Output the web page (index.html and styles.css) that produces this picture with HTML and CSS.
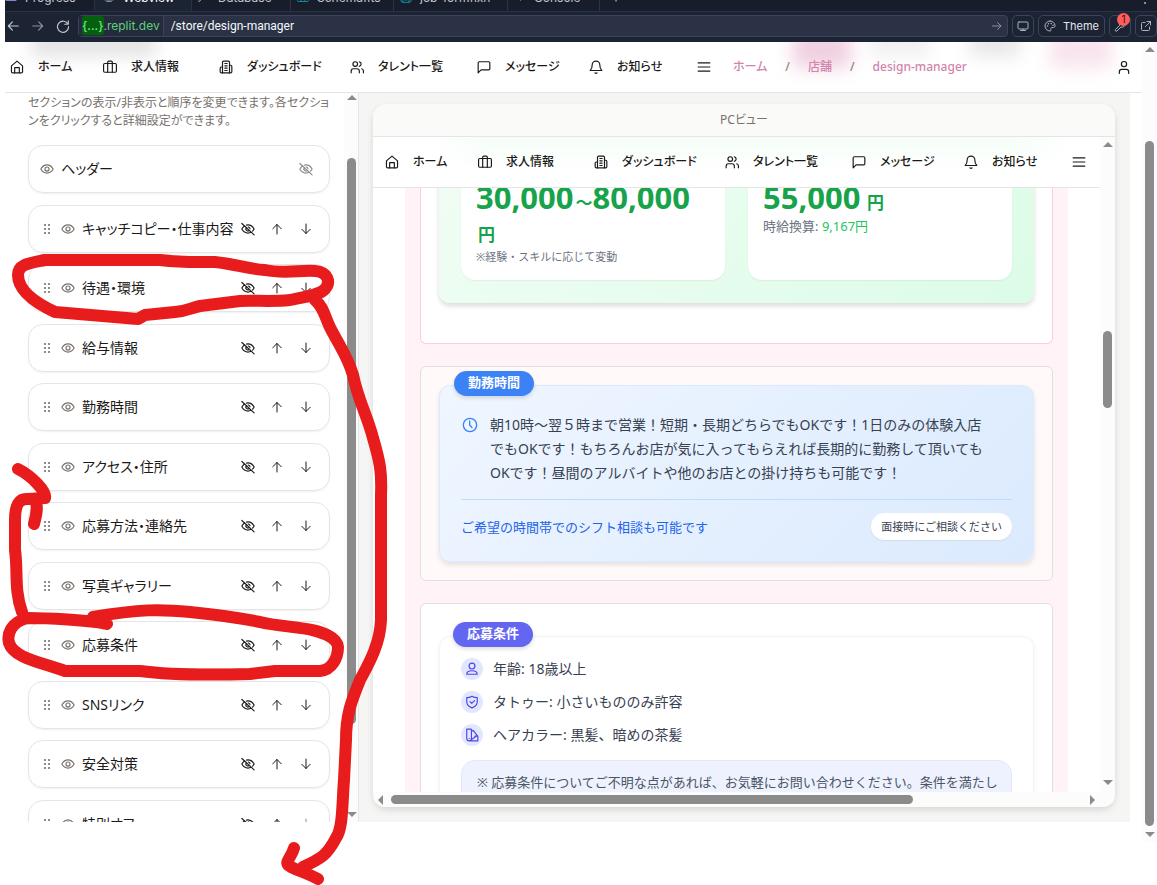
FILE: index.html
```html
<!DOCTYPE html>
<html lang="ja">
<head>
<meta charset="utf-8">
<title>design-manager</title>
<link rel="stylesheet" href="styles.css">
</head>
<body>
<svg class="sprite" aria-hidden="true">
  <symbol id="home" viewBox="0 0 24 24"><path d="M2.500 10 12 2l9.500 8v10a2 2 0 0 1-2 2h-15a2 2 0 0 1-2-2z"/><path d="M8 22v-9h8v9"/></symbol>
  <symbol id="case" viewBox="0 0 24 24"><rect x="1" y="6" width="22" height="15" rx="2"/><path d="M8 21V4a2 2 0 0 1 2-2h4a2 2 0 0 1 2 2v17"/></symbol>
  <symbol id="building" viewBox="0 0 24 24"><path d="M6 22V4a2 2 0 0 1 2-2h8a2 2 0 0 1 2 2v18z"/><path d="M6 12H4a2 2 0 0 0-2 2v6a2 2 0 0 0 2 2h2M18 9h2a2 2 0 0 1 2 2v9a2 2 0 0 1-2 2h-2M10 6h4M10 10h4M10 14h4M10 18h4"/></symbol>
  <symbol id="users" viewBox="0 0 24 24"><circle cx="9" cy="7" r="4"/><path d="M2 22v-3a4 4 0 0 1 4-4h6a4 4 0 0 1 4 4v3M23 22v-3a4 4 0 0 0-3-3.9M16 3.1a4 4 0 0 1 0 7.8"/></symbol>
  <symbol id="message" viewBox="0 0 24 24"><path d="M22 15a2 2 0 0 1-2 2H7l-5 5V5a2 2 0 0 1 2-2h16a2 2 0 0 1 2 2z"/></symbol>
  <symbol id="bell" viewBox="0 0 24 24"><path d="M5.500 8a6.500 6 0 0 1 13 0c0 7 3.500 10 3.500 10H2s3.500-3 3.500-10M10.300 22a2 2 0 0 0 3.400 0"/></symbol>
  <symbol id="menu" viewBox="0 0 24 24"><path d="M2 5h20M2 12h20M2 19h20"/></symbol>
  <symbol id="user" viewBox="0 0 24 24"><circle cx="12" cy="7" r="4.500"/><path d="M4 23v-3a4 4 0 0 1 4-4h8a4 4 0 0 1 4 4v3"/></symbol>
  <symbol id="eye" viewBox="0 0 24 24"><path d="M1.500 12C4 7.500 7.500 5 12 5s8 2.500 10.500 7C20 16.500 16.500 19 12 19s-8-2.500-10.500-7z"/><circle cx="12" cy="12" r="3.500"/></symbol>
  <symbol id="eye-off" viewBox="0 0 24 24"><path d="M1.500 2.500 22.500 22M6.500 6.500C4.500 7.700 2.800 9.600 1.500 12 4 16.500 7.500 19 12 19c2 0 3.700-.5 5.300-1.300M9.500 5.300c.8-.2 1.600-.3 2.500-.3 4.500 0 8 2.500 10.500 7-.8 1.400-1.700 2.600-2.700 3.600M9.500 9.500a3.500 3.500 0 0 0 5 5M12.500 8.500a3.500 3.500 0 0 1 3 3"/></symbol>
  <symbol id="up" viewBox="0 0 24 24"><path d="M12 22V3M3.500 11.500 12 3l8.500 8.500"/></symbol>
  <symbol id="down" viewBox="0 0 24 24"><path d="M12 2v19M3.500 12.500 12 21l8.500-8.500"/></symbol>
  <symbol id="left" viewBox="0 0 24 24"><path d="M21 12H4M11 5l-7 7 7 7"/></symbol>
  <symbol id="right" viewBox="0 0 24 24"><path d="M3 12h17M13 5l7 7-7 7"/></symbol>
  <symbol id="reload" viewBox="0 0 24 24"><path d="M21 3v6h-6M20.500 9A9.500 9.500 0 1 0 21.500 13"/></symbol>
  <symbol id="grip" viewBox="0 0 8 12"><g fill="currentColor" stroke="none"><circle cx="2" cy="2" r="1.100"/><circle cx="6" cy="2" r="1.100"/><circle cx="2" cy="6" r="1.100"/><circle cx="6" cy="6" r="1.100"/><circle cx="2" cy="10" r="1.100"/><circle cx="6" cy="10" r="1.100"/></g></symbol>
  <symbol id="monitor" viewBox="0 0 24 24"><rect x="2" y="4" width="20" height="14" rx="2"/><path d="M12 18v3M7 21h10"/></symbol>
  <symbol id="palette" viewBox="0 0 24 24"><path d="M12 2a10 10 0 1 0 0 20c2 0 2-2 1.500-3.500S14 15 16 15h3c2 0 3-1 3-4 0-5-4.500-9-10-9z"/><path d="M7 12h.1M9 7.500h.1M14.500 7h.1M18 10.500h.1" stroke-width="3"/></symbol>
  <symbol id="wrench" viewBox="0 0 24 24"><path d="M14 3a6 6 0 0 0-3 8L3 19a2 2 0 0 0 3 3l8-8a6 6 0 0 0 8-7l-4 3-3-3 3-4a6 6 0 0 0-4 0z"/></symbol>
  <symbol id="external" viewBox="0 0 24 24"><path d="M14 3h7v7M21 3 11 13M19 14v5a2 2 0 0 1-2 2H5a2 2 0 0 1-2-2V7a2 2 0 0 1 2-2h5"/></symbol>
  <symbol id="clock" viewBox="0 0 24 24"><circle cx="12" cy="12" r="10"/><path d="M11.500 6v6l3.500 4"/></symbol>
  <symbol id="person" viewBox="0 0 24 24"><circle cx="12" cy="7" r="5"/><path d="M3 21c0-4 4-6 9-6s9 2 9 6z"/></symbol>
  <symbol id="shield" viewBox="0 0 24 24"><path d="M12 2c3 2 6 2.500 9 2.500V11c0 5-3.500 9-9 11-5.500-2-9-6-9-11V4.500C6 4.500 9 4 12 2z"/><path d="m8.500 11.500 3 3 5-5"/></symbol>
  <symbol id="swatch" viewBox="0 0 24 24"><path d="M3 2h7a1 1 0 0 1 1 1v15a4 4 0 0 1-8 0zM11 6l3-2 7 9L9 21.500M17 14h5v8H7M7 18h.1"/></symbol>
</svg>

<header class="ide">
  <div class="tabs">
    <span class="tab t1"><svg class="i12 purple"><use href="#menu"/></svg>Progress</span>
    <span class="tab t2 active"><svg class="i12"><use href="#monitor"/></svg>Webview</span>
    <span class="tab t3"><svg class="i12"><use href="#message"/></svg>Database</span>
    <span class="tab t4"><svg class="i12 teal"><use href="#case"/></svg>Schemaflts</span>
    <span class="tab t5"><svg class="i12 teal"><use href="#building"/></svg>job-formfixh</span>
    <span class="tab t6"><svg class="i12"><use href="#right"/></svg>Console</span>
    <span class="tab">+</span>
    <span class="tab more">⋮</span>
  </div>
  <div class="toolbar">
    <button class="bare" aria-label="戻る"><svg class="i14"><use href="#left"/></svg></button>
    <button class="bare dim" aria-label="進む"><svg class="i14"><use href="#right"/></svg></button>
    <button class="bare" aria-label="再読み込み"><svg class="i14"><use href="#reload"/></svg></button>
    <div class="address">
      <span class="host"><b>{...}</b>.replit.dev</span>
      <input class="path" aria-label="パス" value="/store/design-manager">
      <svg class="i12 go"><use href="#right"/></svg>
    </div>
    <button class="tool" aria-label="デバイス"><svg class="i12"><use href="#monitor"/></svg></button>
    <button class="tool theme"><svg class="i12"><use href="#palette"/></svg>Theme</button>
    <button class="tool" aria-label="開発ツール"><svg class="i12"><use href="#wrench"/></svg><span class="count">1</span></button>
    <button class="tool" aria-label="新しいタブ"><svg class="i12"><use href="#external"/></svg></button>
  </div>
</header>

<div class="window">
  <div class="app">
    <nav class="nav main-nav">
      <div class="haze"><i class="h1"></i><i class="h2"></i><i class="h3"></i><i class="h4"></i><i class="h5"></i></div>
      <a href="#"><svg class="i14"><use href="#home"/></svg>ホーム</a>
      <a href="#"><svg class="i14"><use href="#case"/></svg>求人情報</a>
      <a href="#"><svg class="i14"><use href="#building"/></svg>ダッシュボード</a>
      <a href="#"><svg class="i14"><use href="#users"/></svg>タレント一覧</a>
      <a href="#"><svg class="i14"><use href="#message"/></svg>メッセージ</a>
      <a href="#"><svg class="i14"><use href="#bell"/></svg>お知らせ</a>
      <button class="bare" aria-label="メニュー"><svg class="i14"><use href="#menu"/></svg></button>
      <div class="crumbs"><a href="#">ホーム</a><span>/</span><a href="#">店舗</a><span>/</span><a href="#">design-manager</a></div>
      <button class="bare account" aria-label="アカウント"><svg class="i14"><use href="#user"/></svg></button>
    </nav>

    <main class="split">
      <aside class="side">
        <div class="side-body">
          <p class="lead">セクションの表示/非表示と順序を変更できます。各セクションをクリックすると詳細設定ができます。</p>
          <ul class="sections">
            <li class="fixed"><svg class="i14 soft"><use href="#eye"/></svg><span>ヘッダー</span><button class="bare" disabled aria-label="非表示"><svg class="i14"><use href="#eye-off"/></svg></button></li>
            <li><svg class="grip"><use href="#grip"/></svg><svg class="i14 soft"><use href="#eye"/></svg><span>キャッチコピー・仕事内容</span><button class="bare" aria-label="非表示"><svg class="i14"><use href="#eye-off"/></svg></button><button class="bare" aria-label="上へ"><svg class="i12"><use href="#up"/></svg></button><button class="bare" aria-label="下へ"><svg class="i12"><use href="#down"/></svg></button></li>
            <li><svg class="grip"><use href="#grip"/></svg><svg class="i14 soft"><use href="#eye"/></svg><span>待遇・環境</span><button class="bare" aria-label="非表示"><svg class="i14"><use href="#eye-off"/></svg></button><button class="bare" aria-label="上へ"><svg class="i12"><use href="#up"/></svg></button><button class="bare" aria-label="下へ"><svg class="i12"><use href="#down"/></svg></button></li>
            <li><svg class="grip"><use href="#grip"/></svg><svg class="i14 soft"><use href="#eye"/></svg><span>給与情報</span><button class="bare" aria-label="非表示"><svg class="i14"><use href="#eye-off"/></svg></button><button class="bare" aria-label="上へ"><svg class="i12"><use href="#up"/></svg></button><button class="bare" aria-label="下へ"><svg class="i12"><use href="#down"/></svg></button></li>
            <li><svg class="grip"><use href="#grip"/></svg><svg class="i14 soft"><use href="#eye"/></svg><span>勤務時間</span><button class="bare" aria-label="非表示"><svg class="i14"><use href="#eye-off"/></svg></button><button class="bare" aria-label="上へ"><svg class="i12"><use href="#up"/></svg></button><button class="bare" aria-label="下へ"><svg class="i12"><use href="#down"/></svg></button></li>
            <li><svg class="grip"><use href="#grip"/></svg><svg class="i14 soft"><use href="#eye"/></svg><span>アクセス・住所</span><button class="bare" aria-label="非表示"><svg class="i14"><use href="#eye-off"/></svg></button><button class="bare" aria-label="上へ"><svg class="i12"><use href="#up"/></svg></button><button class="bare" aria-label="下へ"><svg class="i12"><use href="#down"/></svg></button></li>
            <li><svg class="grip"><use href="#grip"/></svg><svg class="i14 soft"><use href="#eye"/></svg><span>応募方法・連絡先</span><button class="bare" aria-label="非表示"><svg class="i14"><use href="#eye-off"/></svg></button><button class="bare" aria-label="上へ"><svg class="i12"><use href="#up"/></svg></button><button class="bare" aria-label="下へ"><svg class="i12"><use href="#down"/></svg></button></li>
            <li><svg class="grip"><use href="#grip"/></svg><svg class="i14 soft"><use href="#eye"/></svg><span>写真ギャラリー</span><button class="bare" aria-label="非表示"><svg class="i14"><use href="#eye-off"/></svg></button><button class="bare" aria-label="上へ"><svg class="i12"><use href="#up"/></svg></button><button class="bare" aria-label="下へ"><svg class="i12"><use href="#down"/></svg></button></li>
            <li><svg class="grip"><use href="#grip"/></svg><svg class="i14 soft"><use href="#eye"/></svg><span>応募条件</span><button class="bare" aria-label="非表示"><svg class="i14"><use href="#eye-off"/></svg></button><button class="bare" aria-label="上へ"><svg class="i12"><use href="#up"/></svg></button><button class="bare" aria-label="下へ"><svg class="i12"><use href="#down"/></svg></button></li>
            <li><svg class="grip"><use href="#grip"/></svg><svg class="i14 soft"><use href="#eye"/></svg><span>SNSリンク</span><button class="bare" aria-label="非表示"><svg class="i14"><use href="#eye-off"/></svg></button><button class="bare" aria-label="上へ"><svg class="i12"><use href="#up"/></svg></button><button class="bare" aria-label="下へ"><svg class="i12"><use href="#down"/></svg></button></li>
            <li><svg class="grip"><use href="#grip"/></svg><svg class="i14 soft"><use href="#eye"/></svg><span>安全対策</span><button class="bare" aria-label="非表示"><svg class="i14"><use href="#eye-off"/></svg></button><button class="bare" aria-label="上へ"><svg class="i12"><use href="#up"/></svg></button><button class="bare" aria-label="下へ"><svg class="i12"><use href="#down"/></svg></button></li>
            <li><svg class="grip"><use href="#grip"/></svg><svg class="i14 soft"><use href="#eye"/></svg><span>特別オファー</span><button class="bare" aria-label="非表示"><svg class="i14"><use href="#eye-off"/></svg></button><button class="bare" aria-label="上へ"><svg class="i12"><use href="#up"/></svg></button><button class="bare" disabled aria-label="下へ"><svg class="i12"><use href="#down"/></svg></button></li>
          </ul>
        </div>
        <div class="vbar side-bar"><i class="au"></i><i class="thumb"></i><i class="ad"></i></div>
      </aside>

      <section class="stage">
        <div class="frame">
          <div class="frame-title">PCビュー</div>
          <div class="frame-body">
            <div class="view">
              <nav class="nav sub-nav">
                <a href="#"><svg class="i14"><use href="#home"/></svg>ホーム</a>
                <a href="#"><svg class="i14"><use href="#case"/></svg>求人情報</a>
                <a href="#"><svg class="i14"><use href="#building"/></svg>ダッシュボード</a>
                <a href="#"><svg class="i14"><use href="#users"/></svg>タレント一覧</a>
                <a href="#"><svg class="i14"><use href="#message"/></svg>メッセージ</a>
                <a href="#"><svg class="i14"><use href="#bell"/></svg>お知らせ</a>
                <button class="bare" aria-label="メニュー"><svg class="i14"><use href="#menu"/></svg></button>
              </nav>
              <div class="page">
                <div class="band">
                  <section class="block pay">
                    <div class="green">
                      <div class="stat"><p class="sum">30,000<small>～</small>80,000 <small>円</small></p><p class="tiny">※経験・スキルに応じて変動</p></div>
                      <div class="stat"><p class="sum">55,000<small> 円</small></p><p class="rate">時給換算: <em>9,167円</em></p></div>
                    </div>
                  </section>
                  <section class="block hours">
                    <div class="panel blue">
                      <h3 class="badge">勤務時間</h3>
                      <div class="time"><svg class="i16"><use href="#clock"/></svg><p>朝10時～翌５時まで営業！短期・長期どちらでもOKです！1日のみの体験入店<br>でもOKです！もちろんお店が気に入ってもらえれば長期的に勤務して頂いても<br>OKです！昼間のアルバイトや他のお店との掛け持ちも可能です！</p></div>
                      <div class="shift"><span>ご希望の時間帯でのシフト相談も可能です</span><span class="pill">面接時にご相談ください</span></div>
                    </div>
                  </section>
                  <section class="block terms">
                    <div class="panel plain">
                      <h3 class="badge indigo">応募条件</h3>
                      <ul class="rules">
                        <li><i><svg class="i14"><use href="#person"/></svg></i>年齢: 18歳以上</li>
                        <li><i><svg class="i14"><use href="#shield"/></svg></i>タトゥー: 小さいもののみ許容</li>
                        <li><i><svg class="i14"><use href="#swatch"/></svg></i>ヘアカラー: 黒髪、暗めの茶髪</li>
                      </ul>
                      <p class="note">※ 応募条件についてご不明な点があれば、お気軽にお問い合わせください。条件を満たし</p>
                    </div>
                  </section>
                </div>
              </div>
            </div>
            <div class="vbar view-bar"><i class="au"></i><i class="thumb"></i><i class="ad"></i></div>
          </div>
          <div class="hbar"><i class="al"></i><i class="thumb"></i><i class="ar"></i></div>
        </div>
      </section>
    </main>
  </div>
  <div class="vbar page-bar"><i class="au"></i><i class="thumb"></i><i class="ad"></i></div>
</div>

<svg class="marks" width="1157" height="885" viewBox="0 0 1157 885" aria-hidden="true">
  <path d="M138 319 55 312C40 305 18 292 18 275C18 264 30 263 45 260H160C185 263 200 262 215 262C235 264 248 269 265 270C284 274 300 270 315 271C328 272 331 282 325 289C320 295 304 297 290 300C270 302 255 300 240 301L200 306C190 308 188 311 175 312L145 315Z"/>
  <path d="M315 300C325 308 325 320 333 333C342 350 348 358 353 375C358 400 367 415 373 438C380 462 382 472 381 495V620C380 645 368 665 360 680C351 702 346 715 346 740L344 780C342 805 343 828 336 838C327 855 322 858 303 867"/>
  <path d="M294 848C292 856 285 862 288 865C292 869 305 872 318 879"/>
  <path d="M107 624C90 620 45 618 28 618C10 622 7 635 9 643C14 658 40 662 65 671H140C170 675 215 675 250 674L275 671H320C332 670 338 658 338 647C337 636 320 632 312 630C300 627 275 626 260 622C235 617 210 614 190 612C160 609 140 609 93 617"/>
  <path d="M22 612C14 590 18 570 15 550V520C15 505 19 498 28 499L45 498C47 492 32 476 18 469M36 500C38 510 36 516 34 524"/>
</svg>
</body>
</html>
```
FILE: styles.css
```css
* { box-sizing: border-box; margin: 0; padding: 0; }
body {
  font-family: "Noto Sans", "Noto Sans CJK JP", sans-serif;
  font-size: 14px;
  color: #1c1917;
  background: #fff;
  min-height: 100vh;
  padding-left: 5px;
  overflow: hidden;
  position: relative;
}
.sprite { position: absolute; width: 0; height: 0; }
svg { fill: none; stroke: currentColor; stroke-width: 2; stroke-linecap: round; stroke-linejoin: round; flex: none; display: block; }
.i12 { width: 12px; height: 12px; }
.i14 { width: 14px; height: 14px; }
.i16 { width: 16px; height: 16px; }
ul { list-style: none; }
a { color: inherit; text-decoration: none; }
button { font: inherit; color: inherit; cursor: pointer; }
.bare { border: 0; background: none; display: flex; align-items: center; justify-content: center; }

/* IDE chrome */
.ide { background: #1c2333; color: #c2c8d2; height: 42px; overflow: hidden; font-family: Inter, sans-serif; font-size: 12px; }
.tabs { display: flex; margin-top: -13px; height: 25px; background: #171d2b; border-bottom: 1px solid #2b3245; }
.tab { display: flex; gap: 8px; padding-left: 6px; line-height: 22px; height: 24px; border-right: 1px solid #2b3245; }
.tab svg { margin-top: 4px; color: #7d8799; }
.tab .purple { color: #8b7fd0; }
.tab .teal { color: #148a9c; }
.t1 { width: 90px; padding-left: 0; }
.t2 { width: 97px; padding-left: 8px; }
.t3 { width: 99px; }
.t4 { width: 103px; }
.t5 { width: 114px; }
.t6 { width: 92px; }
.tab:nth-last-child(-n+2) { border: 0; padding-left: 12px; }
.tab.active { background: #1c2333; color: #fff; }
.more { margin-left: auto; padding-right: 6px; }
.toolbar { display: flex; align-items: center; height: 28px; gap: 4px; }
.toolbar > .bare { width: 21px; padding-right: 5px; }
.toolbar > .dim { color: #8790a0; }
.address { flex: 1; min-width: 0; height: 22px; display: flex; align-items: center; border: 1px solid #3c445c; border-radius: 4px; background: #2b3245; padding-right: 4px; margin-left: -2px; }
.host { height: 20px; line-height: 20px; padding: 0 3px; background: #242b3d; border-right: 1px solid #3c445c; color: #5fd07a; font-size: 12px; }
.host b { font-weight: 500; background: #04600f; border-radius: 3px; padding: 2px 0; color: #70e58a; }
.path { flex: 1; min-width: 0; border: 0; background: none; color: #f5f9fc; font: 12px Roboto, sans-serif; padding-left: 7px; outline: 0; }
.go { color: #8790a0; }
.tool { position: relative; height: 22px; width: 22px; border: 1px solid #3c445c; border-radius: 5px; background: #1c2333; display: flex; align-items: center; justify-content: center; }
.tool svg { color: #aab2bf; }
.theme { width: 67px; gap: 7px; font-size: 11px; color: #e3e7ec; }
.count { position: absolute; top: -3px; right: 0; width: 13px; height: 13px; border-radius: 7px; background: #ff5c5c; color: #3a0d0d; font-size: 10px; line-height: 13px; text-align: center; }

/* Scrollbars */
.vbar { background: #fcfcfc; display: flex; flex-direction: column; align-items: center; padding: 5px 0; gap: 8px; flex: none; width: 15px; }
.vbar .thumb { width: 9px; border-radius: 5px; background: #8b8b8b; }
.au, .ad { border: 5px solid transparent; width: 0; height: 0; }
.au { border-top: 0; border-bottom-color: #8b8b8b; }
.ad { border-bottom: 0; border-top-color: #8b8b8b; margin-top: auto; }
.page-bar { padding-bottom: 5px; gap: 6px; }
.page-bar .thumb { flex: 1; margin-top: 83px; }
.side-bar { padding-top: 2px; }
.side-bar .thumb { height: 566px; margin-top: 50px; }
.view-bar { padding-bottom: 7px; }
.view-bar .thumb { height: 77px; margin-top: 176px; }
.hbar { height: 15px; display: flex; align-items: center; background: #fcfcfc; padding: 0 20px 0 5px; gap: 8px; border-radius: 0 0 12px 12px; }
.hbar .thumb { flex: 0 0 522px; height: 9px; border-radius: 5px; background: #8b8b8b; }
.al, .ar { border: 5px solid transparent; width: 0; height: 0; }
.al { border-left: 0; border-right-color: #8b8b8b; }
.ar { border-right: 0; border-left-color: #8b8b8b; margin-left: auto; }

/* App shell */
.window { display: flex; height: calc(100vh - 85px); }
.app { flex: 1; min-width: 0; display: flex; flex-direction: column; padding-bottom: 20px; font-feature-settings: "palt"; }
.nav { display: grid; grid-template-columns: 93px 116px 131px 127px 112px 108px 14px; align-items: center; height: 51px; flex: none; padding-left: 5px; border-bottom: 1px solid #e5e5e5; font-weight: 500; font-size: 12px; line-height: 18px; position: relative; }
.nav > a { display: flex; align-items: center; gap: 14px; white-space: nowrap; }
.main-nav { grid-template-columns: 93px 116px 131px 127px 112px 108px 14px 1fr 36px; }
.crumbs { display: flex; gap: 18px; padding-left: 22px; color: #d284ab; }
.crumbs span { color: #8b8580; }
.haze { position: absolute; inset: 0; overflow: hidden; z-index: -1; }
.haze i { position: absolute; top: -12px; height: 26px; filter: blur(9px); background: #e2e2e2; }
.haze .h1 { left: 26px; width: 125px; }
.haze .h2 { left: 788px; width: 58px; height: 38px; background: #f0cfe0; }
.haze .h3 { left: 865px; width: 60px; background: #efefef; }
.haze .h4 { left: 965px; width: 50px; background: #e6e6e6; }
.haze .h5 { left: 1045px; width: 62px; height: 38px; background: #f8e4ed; }
.split { flex: 1; min-height: 0; display: flex; padding-right: 12px; }

/* Section list */
.side { width: 354px; flex: none; display: flex; border-right: 1px solid #e5e5e5; overflow: hidden; }
.side-body { flex: 1; padding: 1px 14px 0 23px; }
.side-bar { margin-right: 0; }
.lead { font-size: 12px; line-height: 18px; color: #78716c; margin-bottom: 15px; }
.sections { min-height: 703px; display: flex; flex-direction: column; justify-content: space-between; }
.sections li { height: 48px; border: 1px solid #e5e5e5; border-radius: 15px; box-shadow: 0 1px 2px rgba(0, 0, 0, .06); display: flex; align-items: center; padding: 0 9px 0 14px; }
.sections .fixed { padding-left: 11px; }
.sections span { flex: 1; min-width: 0; padding: 0 0 2px 7px; white-space: nowrap; }
.sections .bare { width: 29px; height: 28px; flex: none; }
.sections .bare:disabled { opacity: .5; }
.grip { width: 8px; height: 12px; color: #78716c; margin-right: 10px; }
.soft { color: #78716c; }

/* Preview */
.stage { flex: 1; min-width: 0; background: #f5f5f4; padding: 11px 15px 15px 14px; display: flex; }
.frame { flex: 1; min-width: 0; display: flex; flex-direction: column; border-radius: 14px; background: #fff; box-shadow: 0 3px 6px rgba(0, 0, 0, .12); }
.frame-title { height: 33px; line-height: 32px; text-align: center; font-size: 12px; color: #78716c; background: #fafaf9; border-bottom: 1px solid #e5e5e5; border-radius: 14px 14px 0 0; flex: none; }
.frame-body { flex: 1; min-height: 0; display: flex; }
.view { flex: 1; min-width: 0; overflow: hidden; display: flex; flex-direction: column; }
.sub-nav { padding-left: 12px; background: linear-gradient(90deg, #fff 0, #fff 60px, #f5fef8 110px, #f5fef8 640px, #fff 700px); }
.sub-nav::before { content: ""; position: absolute; inset: 0; background: linear-gradient(rgba(255, 255, 255, 0), #fff 35px); z-index: 0; }
.sub-nav > * { position: relative; }
.page { flex: 1; min-height: 0; overflow: hidden; padding: 0 32px; font-feature-settings: normal; }
.band { background: #fff3f7; margin-top: -20px; padding: 0 15px; display: flex; flex-direction: column; gap: 22px; }
.block { border: 1px solid #e0e0e0; border-radius: 6px; padding: 18px; background: #fff; }
.pay { border-color: #fecdd8; padding-top: 0; padding-bottom: 40px; border-top: 0; }
.green { display: grid; grid-template-columns: 1fr 1fr; gap: 23px; padding: 0 22px 23px; border-radius: 0 0 11px 11px; background: linear-gradient(135deg, #f0fdf4, #dcfce7); box-shadow: 0 3px 5px rgba(0, 0, 0, .14); }
.stat { background: #fff; border-radius: 0 0 14px 14px; padding: 13px 15px 14px; box-shadow: 0 1px 2px rgba(0, 0, 0, .06); }
.sum { font-size: 31px; line-height: 32px; font-weight: 700; color: #16a34a; margin-bottom: 3px; }
.sum small { font-size: 17px; line-height: 16px; padding-left: 2px; }
.tiny { font-size: 11px; line-height: 18px; color: #6b7280; }
.rate { font-size: 13px; line-height: 20px; color: #6b7280; }
.rate em { font-style: normal; color: #22c55e; }
.hours { background: #fff9f9; }
.panel { position: relative; border-radius: 11px; padding: 27px 21px 21px; border: 1px solid #dbeafe; box-shadow: 0 3px 5px rgba(0, 0, 0, .1); color: #374151; }
.blue { background: linear-gradient(135deg, #eff6ff, #dbeafe); }
.badge { position: absolute; left: 14px; top: -15px; height: 25px; line-height: 23px; padding: 0 14px; border-radius: 13px; background: #3b82f6; color: #fff; font-size: 13px; box-shadow: 0 2px 4px rgba(0, 0, 0, .14); }
.indigo { background: #6366f1; left: 13px; }
.time { display: flex; gap: 12px; line-height: 24px; white-space: nowrap; padding: 0 1px 14px; border-bottom: 1px solid #bfdbfe; }
.time svg { color: #3b82f6; margin-top: 4px; }
.shift { display: flex; align-items: center; justify-content: space-between; padding-top: 13px; color: #2563eb; font-size: 13px; }
.pill { background: #fff; color: #374151; font-size: 11px; line-height: 27px; padding: 0 10px; border-radius: 14px; box-shadow: 0 1px 2px rgba(0, 0, 0, .06); }
.terms { padding-top: 32px; }
.plain { border-color: #f3f4f6; padding-top: 21px; box-shadow: 0 2px 5px rgba(0, 0, 0, .06); }
.rules { display: flex; flex-direction: column; gap: 11px; }
.rules li { display: flex; align-items: center; gap: 10px; line-height: 22px; }
.rules i { width: 22px; height: 22px; border-radius: 11px; background: #e0e7ff; color: #4f46e5; display: flex; align-items: center; justify-content: center; }
.note { margin-top: 14px; border: 1px solid #e0e7ff; border-radius: 14px; background: #eef2ff; padding: 9px 15px 30px; font-size: 13px; line-height: 24px; color: #4b5563; white-space: nowrap; }

/* Hand-drawn annotations over the whole screen */
.marks { position: absolute; left: 0; top: 0; stroke: #e81c1c; stroke-width: 12; pointer-events: none; z-index: 5; }
```
